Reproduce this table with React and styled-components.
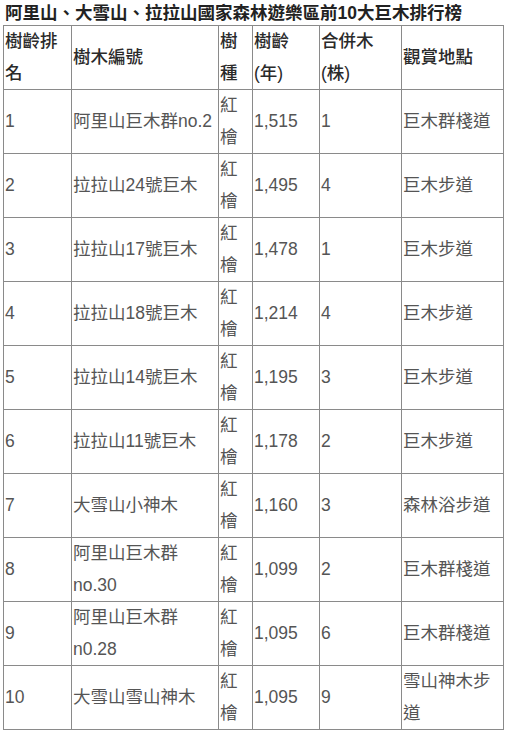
import React from "react";
import styled, { createGlobalStyle } from "styled-components";

const Global = createGlobalStyle`
  body {
    margin: 0;
    background: #fff;
    font-family: "Liberation Sans", "Noto Sans CJK TC", sans-serif;
  }
`;

const Page = styled.div`
  padding: 0 3px;
`;

const Title = styled.h2`
  margin: 0;
  padding: 2px 0 0 2px;
  height: 25px;
  box-sizing: border-box;
  font-size: 17.5px;
  line-height: 22px;
  font-weight: bold;
  color: #222;
`;

const Table = styled.table`
  width: 501px;
  border-collapse: collapse;
  table-layout: fixed;
`;

const Col = styled.col`
  width: ${(p) => p.$w}px;
`;

const Cell = styled.td`
  border: 1px solid #8a8a8a;
  padding: 0 1px 0 1px;
  vertical-align: middle;
  font-size: 17.5px;
  line-height: 31.5px;
  color: ${(p) => (p.$head ? "#2a2a2a" : "#555")};
  font-weight: ${(p) => (p.$head ? 500 : "normal")};
`;

const cols = [68, 147, 34, 67, 82, 102];

const head = ["樹齡排名", "樹木編號", "樹種", "樹齡(年)", "合併木(株)", "觀賞地點"];

const rows = [
  ["1", "阿里山巨木群no.2", "紅檜", "1,515", "1", "巨木群棧道"],
  ["2", "拉拉山24號巨木", "紅檜", "1,495", "4", "巨木步道"],
  ["3", "拉拉山17號巨木", "紅檜", "1,478", "1", "巨木步道"],
  ["4", "拉拉山18號巨木", "紅檜", "1,214", "4", "巨木步道"],
  ["5", "拉拉山14號巨木", "紅檜", "1,195", "3", "巨木步道"],
  ["6", "拉拉山11號巨木", "紅檜", "1,178", "2", "巨木步道"],
  ["7", "大雪山小神木", "紅檜", "1,160", "3", "森林浴步道"],
  ["8", "阿里山巨木群no.30", "紅檜", "1,099", "2", "巨木群棧道"],
  ["9", "阿里山巨木群n0.28", "紅檜", "1,095", "6", "巨木群棧道"],
  ["10", "大雪山雪山神木", "紅檜", "1,095", "9", "雪山神木步道"],
];

export default function App() {
  return (
    <Page>
      <Global />
      <Title>阿里山、大雪山、拉拉山國家森林遊樂區前10大巨木排行榜</Title>
      <Table>
        <colgroup>
          {cols.map((w, i) => (
            <Col key={i} $w={w} />
          ))}
        </colgroup>
        <tbody>
          <tr>
            {head.map((h, i) => (
              <Cell key={i} $head>
                {h}
              </Cell>
            ))}
          </tr>
          {rows.map((r) => (
            <tr key={r[0]}>
              {r.map((c, i) => (
                <Cell key={i}>{c}</Cell>
              ))}
            </tr>
          ))}
        </tbody>
      </Table>
    </Page>
  );
}
